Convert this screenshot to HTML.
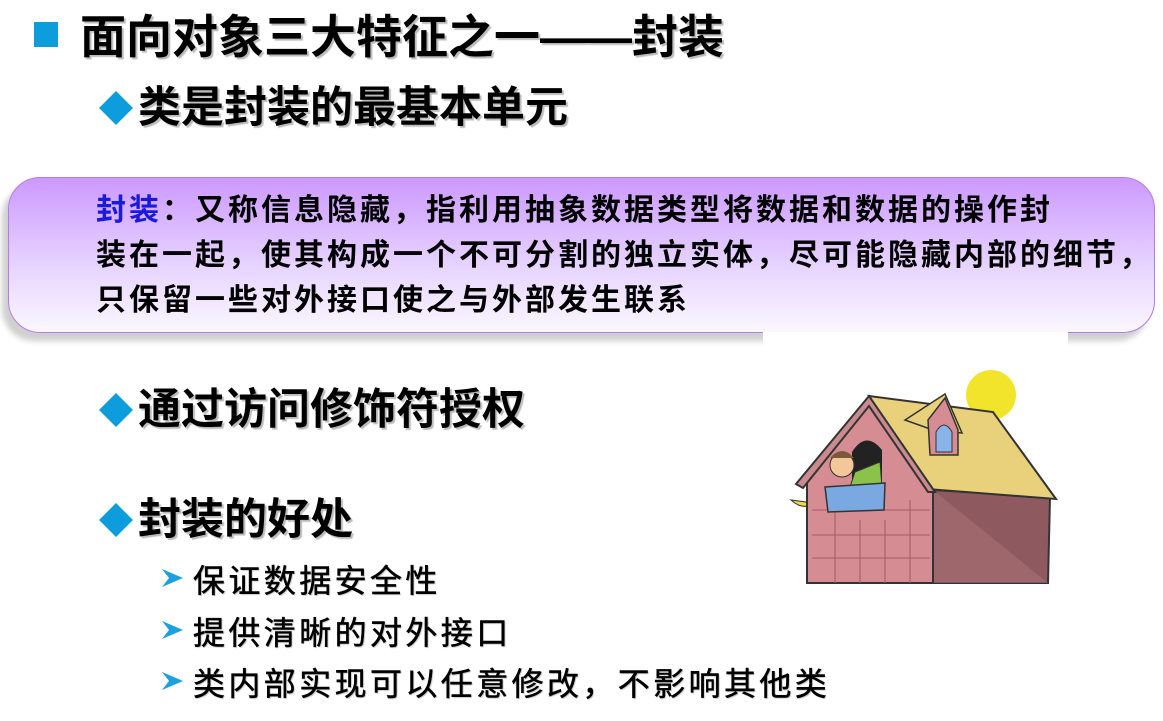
<!DOCTYPE html>
<html><head><meta charset="utf-8"><style>
body{margin:0;width:1163px;height:721px;background:#fff;position:relative;overflow:hidden;font-family:"Liberation Sans","Noto Sans CJK SC",sans-serif;}
.a{position:absolute;white-space:nowrap;font-weight:bold;color:#000;}
.h{text-shadow:2px 2px 1px #bbb;}
.sq{position:absolute;left:34px;top:22px;width:24px;height:25px;background:#0e9ddc;}
.dm{position:absolute;width:24px;height:24px;background:#0e9ddc;transform:rotate(45deg);}
.box{position:absolute;left:8px;top:177px;width:1145px;height:154px;border:1.5px solid #b47ce6;border-radius:32px;background:linear-gradient(#cc99ff,#e8d6ff 60%,#fbf7ff);box-shadow:-6px 8px 6px #d0d0d0;}
.bt{font-size:30px;line-height:45px;letter-spacing:3px;}
.sub{font-size:32px;font-weight:normal;letter-spacing:3.4px;text-shadow:1px 1px 1px #bbb;-webkit-text-stroke:0.5px #000;}
</style></head><body>
<div class="sq"></div>
<div class="a h" style="left:80px;top:9px;font-size:46px;line-height:56px;">面向对象三大特征之一——封装</div>
<div class="dm" style="left:104px;top:96px;"></div>
<div class="a h" style="left:138px;top:80px;font-size:43px;line-height:56px;">类是封装的最基本单元</div>
<div class="box"></div>
<div class="a bt" style="left:96px;top:188px;"><span style="color:#1a1adc">封装</span>：又称信息隐藏，指利用抽象数据类型将数据和数据的操作封</div>
<div class="a bt" style="left:96px;top:233px;">装在一起，使其构成一个不可分割的独立实体，尽可能隐藏内部的细节，</div>
<div class="a bt" style="left:96px;top:278px;">只保留一些对外接口使之与外部发生联系</div>
<div style="position:absolute;left:763px;top:332px;width:305px;height:20px;background:#fff"></div>
<div class="dm" style="left:104px;top:398px;"></div>
<div class="a h" style="left:138px;top:382px;font-size:43px;line-height:56px;">通过访问修饰符授权</div>
<div class="dm" style="left:104px;top:508px;"></div>
<div class="a h" style="left:138px;top:492px;font-size:43px;line-height:56px;">封装的好处</div>
<svg style="position:absolute;left:0;top:0" width="1163" height="721">
<g fill="#1d9fe0"><path d="M162 569 L183 578 L162 587 L169 578Z"/><path d="M162 621 L183 630 L162 639 L169 630Z"/><path d="M162 672 L183 681 L162 690 L169 681Z"/></g>
<circle cx="991" cy="395" r="25" fill="#f2e42a"/>
<path d="M791 500 Q800 508 808 506 L806 502 Z" fill="#f0d940" stroke="#333"/>
<path d="M933 490 L1050 497 L1048 583 L933 583Z" fill="#8f5a5f" stroke="#333" stroke-width="2"/>
<path d="M933 490 L1048 583 L933 583Z" fill="#a87073" opacity=".6"/>
<path d="M807 478 L869 400 L933 490 L933 583 L807 583Z" fill="#d58d93" stroke="#333" stroke-width="2"/>
<g stroke="#a45c62" stroke-width="1" fill="none"><path d="M812 510H930M812 535H930M812 558H930M835 500V583M860 520V583M885 520V583M910 500V583"/></g>
<path d="M852 487 L852 452 Q866 430 882 450 L882 487Z" fill="#222"/>
<circle cx="842" cy="465" r="12" fill="#f3c79a" stroke="#333"/>
<path d="M830 458 Q842 444 854 458" fill="#7a5a3a"/>
<path d="M855 472 L880 462 L882 487 L850 487Z" fill="#8bc34a" stroke="#333"/>
<path d="M825 487 L885 483 L884 510 L828 512Z" fill="#79a9e0" stroke="#333" stroke-width="1.5"/>
<path d="M869 396 L993 412 L1056 499 L927 489Z" fill="#e8d17a" stroke="#333" stroke-width="2"/>
<path d="M796 484 L869 396 L935 492 L928 492 L869 406 L803 488Z" fill="#c98a90" stroke="#333" stroke-width="2"/>
<path d="M905 420 L945 394 L962 433 L933 430Z" fill="#e8d17a" stroke="#333" stroke-width="1.5"/>
<path d="M928 420 L945 398 L958 430 L958 455 L930 455Z" fill="#d58d93" stroke="#333" stroke-width="1.5"/>
<path d="M936 452 V432 Q944 418 952 432 V452Z" fill="#8ab4e8" stroke="#333"/>
</svg>
<div class="a sub" style="left:193px;top:556px;">保证数据安全性</div>
<div class="a sub" style="left:193px;top:608px;">提供清晰的对外接口</div>
<div class="a sub" style="left:193px;top:659px;">类内部实现可以任意修改，不影响其他类</div>
</body></html>
